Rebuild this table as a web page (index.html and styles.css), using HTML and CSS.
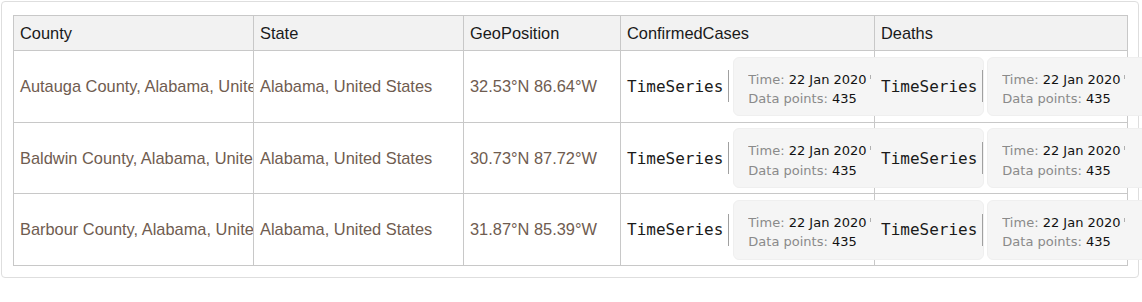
FILE: index.html
```html
<!DOCTYPE html>
<html>
<head>
<meta charset="utf-8">
<link rel="stylesheet" href="styles.css">
</head>
<body>
<div class="frame">
  <table class="grid">
    <colgroup>
      <col class="c-county"><col class="c-state"><col class="c-geo"><col class="c-conf"><col class="c-deaths">
    </colgroup>
    <thead>
      <tr class="head">
        <th>County</th><th>State</th><th>GeoPosition</th><th>ConfirmedCases</th><th>Deaths</th>
      </tr>
    </thead>
    <tbody>
      <tr class="row">
        <td class="ent clip">Autauga County, Alabama, United States</td>
        <td class="ent">Alabama, United States</td>
        <td class="ent">32.53°N 86.64°W</td>
        <td class="tsc"><div class="ts"><span class="mono">TimeSeries</span><span class="brk"></span><div class="box"><div class="inner"><div class="ln"><span class="lbl">Time:</span> <span class="val">22 Jan 2020</span><span class="tick"></span></div><div class="ln"><span class="lbl">Data points:</span> <span class="val">435</span></div></div></div></div></td>
        <td class="tsc"><div class="ts"><span class="mono">TimeSeries</span><span class="brk"></span><div class="box"><div class="inner"><div class="ln"><span class="lbl">Time:</span> <span class="val">22 Jan 2020</span><span class="tick"></span></div><div class="ln"><span class="lbl">Data points:</span> <span class="val">435</span></div></div></div></div></td>
      </tr>
      <tr class="row">
        <td class="ent clip">Baldwin County, Alabama, United States</td>
        <td class="ent">Alabama, United States</td>
        <td class="ent">30.73°N 87.72°W</td>
        <td class="tsc"><div class="ts"><span class="mono">TimeSeries</span><span class="brk"></span><div class="box"><div class="inner"><div class="ln"><span class="lbl">Time:</span> <span class="val">22 Jan 2020</span><span class="tick"></span></div><div class="ln"><span class="lbl">Data points:</span> <span class="val">435</span></div></div></div></div></td>
        <td class="tsc"><div class="ts"><span class="mono">TimeSeries</span><span class="brk"></span><div class="box"><div class="inner"><div class="ln"><span class="lbl">Time:</span> <span class="val">22 Jan 2020</span><span class="tick"></span></div><div class="ln"><span class="lbl">Data points:</span> <span class="val">435</span></div></div></div></div></td>
      </tr>
      <tr class="row">
        <td class="ent clip">Barbour County, Alabama, United States</td>
        <td class="ent">Alabama, United States</td>
        <td class="ent">31.87°N 85.39°W</td>
        <td class="tsc"><div class="ts"><span class="mono">TimeSeries</span><span class="brk"></span><div class="box"><div class="inner"><div class="ln"><span class="lbl">Time:</span> <span class="val">22 Jan 2020</span><span class="tick"></span></div><div class="ln"><span class="lbl">Data points:</span> <span class="val">435</span></div></div></div></div></td>
        <td class="tsc"><div class="ts"><span class="mono">TimeSeries</span><span class="brk"></span><div class="box"><div class="inner"><div class="ln"><span class="lbl">Time:</span> <span class="val">22 Jan 2020</span><span class="tick"></span></div><div class="ln"><span class="lbl">Data points:</span> <span class="val">435</span></div></div></div></div></td>
      </tr>
    </tbody>
  </table>
</div>
</body>
</html>
```

FILE: styles.css
```css
html, body {
  margin: 0;
  padding: 0;
  background: #ffffff;
  overflow: hidden;
}
body {
  padding: 1px;
  font-family: "Liberation Sans", Arial, sans-serif;
}
.frame {
  width: 1138px;
  box-sizing: border-box;
  border: 1px solid #dedede;
  border-radius: 4px;
  padding: 13px 10px 11px 11px;
}
.grid {
  border-collapse: collapse;
  table-layout: fixed;
  width: 1114px;
  font-size: 16.4px;
}
.c-county { width: 240px; }
.c-state { width: 210px; }
.c-geo { width: 157px; }
.c-conf { width: 254px; }
.c-deaths { width: 253px; }
.grid th, .grid td {
  border: 1px solid #c8c8c8;
  padding: 0 0 0 6px;
  white-space: nowrap;
  text-align: left;
  vertical-align: middle;
}
.head th {
  height: 34px;
  background: #f2f2f2;
  font-weight: normal;
  color: #1a1a1a;
}
.row td {
  height: 70.7px;
}
.ent {
  color: #6f5c50;
}
.clip {
  overflow: hidden;
}
.tsc {
  overflow: visible;
}
.ts {
  display: flex;
  align-items: center;
}
.mono {
  font-family: "DejaVu Sans Mono", monospace;
  font-size: 16px;
  color: #1a1a1a;
}
.brk {
  display: block;
  width: 3px;
  height: 30px;
  margin-left: 5px;
  margin-right: 4px;
  border: 1px solid #a0a0a0;
  border-right: none;
}
.box {
  flex: none;
  width: 251px;
  box-sizing: border-box;
  padding: 12px 0 7px 14px;
  background: #f5f5f5;
  border: 1px solid #efefef;
  border-radius: 6px;
  font-family: "DejaVu Sans", sans-serif;
  font-size: 13px;
  line-height: 19.3px;
}
.inner {
  width: 123px;
  overflow: hidden;
}
.ln {
  white-space: nowrap;
}
.lbl {
  color: #8a8a8a;
}
.val {
  color: #111;
}
.tick {
  display: inline-block;
  width: 1px;
  height: 4px;
  margin-left: 3px;
  background: #b0b0b0;
  vertical-align: 5px;
}
```
